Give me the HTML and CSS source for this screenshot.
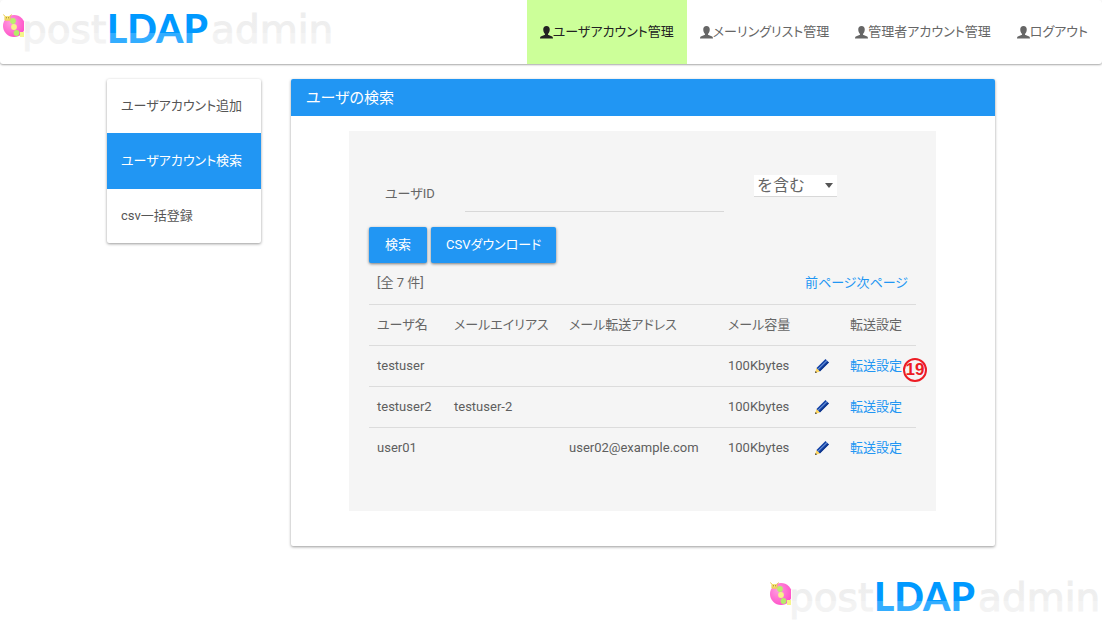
FILE: index.html
```
<!DOCTYPE html>
<html lang="ja">
<head>
<meta charset="utf-8">
<title>postLDAPadmin</title>
<link rel="stylesheet" href="styles.css">
</head>
<body>
<svg class="defs" width="0" height="0" aria-hidden="true">
  <defs>
    <linearGradient id="blue" gradientUnits="userSpaceOnUse" x1="0" y1="15" x2="0" y2="42">
      <stop offset="0" stop-color="#0099ff"/><stop offset=".66" stop-color="#0099ff"/>
      <stop offset=".67" stop-color="#33adff"/><stop offset="1" stop-color="#33adff"/>
    </linearGradient>
    <linearGradient id="grey" gradientUnits="userSpaceOnUse" x1="0" y1="15" x2="0" y2="42">
      <stop offset="0" stop-color="#eeeeee"/><stop offset=".66" stop-color="#efefef"/>
      <stop offset=".67" stop-color="#f3f3f3"/><stop offset="1" stop-color="#f3f3f3"/>
    </linearGradient>
    <radialGradient id="pink" cx=".35" cy=".35" r=".8">
      <stop offset="0" stop-color="#ff9be0"/><stop offset="1" stop-color="#ff45c4"/>
    </radialGradient>
    <symbol id="logo" viewBox="0 0 335 64">
      <circle cx="14" cy="26" r="11" fill="url(#pink)"/>
      <path d="M24 22h3v16h-3z" fill="#fff"/>
      <path d="M20 32h4v5h-4z" fill="#f6f58a"/>
      <circle cx="16.500" cy="33" r="2.900" fill="#b5ec6a"/>
      <circle cx="14" cy="27" r="2.900" fill="#f6f58a"/>
      <circle cx="13" cy="21" r="2.900" fill="#b9f06c"/>
      <path d="M5 16h5v4.500H5z" fill="#f8e67a"/>
      <path d="M3.500 14.500l1.500 2V20h5v-3.500l1.500-2" fill="none" stroke="#e9c94c"/>
      <path d="M6.500 17v1.500M8.500 17v1.500" stroke="#a58a30" stroke-width=".8"/>
      <text class="logo-light" x="22" y="43" fill="url(#grey)" stroke="url(#grey)">post</text>
      <text class="logo-bold" x="107" y="43" fill="url(#blue)">LDAP</text>
      <text class="logo-light" x="211" y="43" fill="url(#grey)" stroke="url(#grey)">admin</text>
    </symbol>
    <symbol id="person" viewBox="0 0 14 14">
      <path d="M7 0C4.600 0 3.500 1.600 3.500 3.800c0 1.900.7 3.700 1.900 4.700v1L1.500 11C.5 11.400 0 12 0 13.500h14c0-1.500-.5-2.100-1.500-2.500L8.600 9.500v-1c1.200-1 1.900-2.800 1.900-4.700C10.500 1.600 9.400 0 7 0z" fill="currentColor"/>
    </symbol>
    <symbol id="pencil" viewBox="0 0 14 14">
      <path d="M0 14l1.500-5 3.500 3.500z" fill="#ffd65c"/>
      <path d="M0 14l.6-2 1.400 1.400z" fill="#333"/>
      <path d="M1.500 9L10.500 0 14 3.500l-9 9z" fill="#1443a5"/>
      <path d="M3 10.300L12 1.500" stroke="#8fb4ee"/>
      <path d="M4.500 12L13.500 3" stroke="#0b2d78"/>
    </symbol>
  </defs>
</svg>

<header class="topbar">
  <a class="brand" href="#" aria-label="postLDAPadmin"><svg class="logo"><use href="#logo"/></svg></a>
  <nav class="tabs">
    <a class="tab tab-active" href="#"><svg class="person"><use href="#person"/></svg>ユーザアカウント管理</a>
    <a class="tab" href="#"><svg class="person"><use href="#person"/></svg>メーリングリスト管理</a>
    <a class="tab" href="#"><svg class="person"><use href="#person"/></svg>管理者アカウント管理</a>
    <a class="tab" href="#"><svg class="person"><use href="#person"/></svg>ログアウト</a>
  </nav>
</header>

<main class="layout">
  <nav class="side card">
    <a class="side-link" href="#">ユーザアカウント追加</a>
    <a class="side-link side-active" href="#">ユーザアカウント検索</a>
    <a class="side-link" href="#">csv一括登録</a>
  </nav>
  <section class="panel card">
    <h1 class="panel-title">ユーザの検索</h1>
    <div class="box">
      <form class="search">
        <div class="fields">
          <label class="field-label" for="uid">ユーザID</label>
          <input class="field-input" id="uid" type="text">
          <div class="select-wrap">
            <select class="field-select" aria-label="検索条件"><option>を含む</option></select>
            <svg class="caret" viewBox="0 0 8 5"><path d="M0 0h8L4 5z" fill="#555"/></svg>
          </div>
        </div>
        <div class="buttons">
          <button class="btn" type="button">検索</button>
          <button class="btn" type="button">CSVダウンロード</button>
        </div>
      </form>
      <table class="users">
        <colgroup><col class="c-name"><col class="c-alias"><col class="c-forward"><col class="c-size"><col class="c-edit"><col class="c-set"></colgroup>
        <thead>
          <tr class="summary"><td>[全 7 件]</td><td class="pager" colspan="5"><a href="#">前ページ</a><a href="#">次ページ</a></td></tr>
          <tr><th>ユーザ名</th><th>メールエイリアス</th><th>メール転送アドレス</th><th>メール容量</th><th></th><th>転送設定</th></tr>
        </thead>
        <tbody>
          <tr><td>testuser</td><td></td><td></td><td>100Kbytes</td><td><a href="#" aria-label="編集"><svg class="pencil"><use href="#pencil"/></svg></a></td><td class="marked"><a href="#">転送設定</a><span class="marker">19</span></td></tr>
          <tr><td>testuser2</td><td>testuser-2</td><td></td><td>100Kbytes</td><td><a href="#" aria-label="編集"><svg class="pencil"><use href="#pencil"/></svg></a></td><td><a href="#">転送設定</a></td></tr>
          <tr><td>user01</td><td></td><td>user02@example.com</td><td>100Kbytes</td><td><a href="#" aria-label="編集"><svg class="pencil"><use href="#pencil"/></svg></a></td><td><a href="#">転送設定</a></td></tr>
        </tbody>
      </table>
    </div>
  </section>
</main>

<footer class="footer"><svg class="logo" role="img" aria-label="postLDAPadmin"><use href="#logo"/></svg></footer>
</body>
</html>
```
FILE: styles.css
```
* { box-sizing: border-box; }
body {
  margin: 0;
  min-height: 100vh;
  display: flex;
  flex-direction: column;
  background: #fff;
  color: #666;
  font: 13px/20px Roboto, "Noto Sans CJK JP", sans-serif;
  font-feature-settings: "palt";
}
a { color: #2196f3; text-decoration: none; }
.defs { position: absolute; }

.topbar {
  display: flex;
  justify-content: space-between;
  height: 64px;
  border-radius: 3px;
  box-shadow: 0 1px 2px rgba(0, 0, 0, .35);
}
.brand { display: flex; }
.logo { width: 335px; height: 64px; display: block; }
.logo-light { font: 39px "DejaVu Sans", sans-serif; stroke-width: 1px; }
.logo-bold { font: 900 39px Lato, sans-serif; }
.tabs { display: flex; padding-right: 1px; }
.tab {
  display: flex;
  align-items: center;
  padding: 0 13px;
  color: #666;
  white-space: nowrap;
}
.tab-active { background: #ccff99; color: #222; }
.person { width: 13px; height: 13px; flex: none; }

.layout {
  display: grid;
  grid-template-columns: 154fr 704fr;
  gap: 30px;
  align-items: start;
  padding: 15px 107px 0;
}
.card {
  background: #fff;
  border-radius: 2px;
  box-shadow: 0 1px 3px rgba(0, 0, 0, .4);
  overflow: hidden;
}
.side-link {
  display: flex;
  align-items: center;
  height: 54px;
  padding: 0 14px;
  color: #555;
  white-space: nowrap;
}
.side-active { height: 56px; background: #2196f3; color: #fff; }

.panel { padding-bottom: 35px; }
.panel-title {
  margin: 0;
  padding: 9px 15px 8px;
  background: #2196f3;
  color: #fff;
  font-size: 15px;
  font-weight: 400;
  line-height: 20px;
}
.box { margin: 15px 59px 0 58px; padding: 20px 20px 43px; background: #f5f5f5; }
.fields {
  display: grid;
  grid-template-columns: 80px 259px 83px;
  column-gap: 16px;
  padding-top: 20px;
}
.field-label { padding: 13px 0 0 16px; }
.field-input {
  width: 100%;
  height: 41px;
  border: 0;
  border-bottom: 1px solid #d8d8d8;
  background: transparent;
  font: inherit;
  color: inherit;
}
.select-wrap { position: relative; margin: 4px 0 0 14px; width: 83px; height: 22px; }
.field-select {
  width: 100%;
  height: 22px;
  padding: 0 3px;
  border: 0;
  border-bottom: 1px solid #d8d8d8;
  appearance: none;
  background: #fff;
  color: #666;
  font: 16px/20px Roboto, "Noto Sans CJK JP", sans-serif;
}
.caret { position: absolute; right: 4px; top: 8px; width: 8px; height: 5px; pointer-events: none; }
.buttons { display: flex; gap: 4px; padding-top: 15px; }
.btn {
  min-width: 58px;
  height: 36px;
  padding: 0 15px;
  border: 0;
  border-radius: 2px;
  background: #2196f3;
  color: #fff;
  font: 400 13px/20px Roboto, "Noto Sans CJK JP", sans-serif;
  font-feature-settings: inherit;
  box-shadow: 0 1px 3px rgba(0, 0, 0, .5);
}

.users { width: 100%; table-layout: fixed; border-collapse: collapse; }
.c-name { width: 77px; }
.c-alias { width: 115px; }
.c-forward { width: 159px; }
.c-size { width: 86px; }
.c-edit { width: 36px; }
.c-set { width: 74px; }
.users th, .users td {
  height: 41px;
  padding: 0 8px;
  text-align: left;
  font-weight: 400;
  white-space: nowrap;
}
.users tbody td { color: #5e5e5e; }
.users tr + tr, .users tbody tr { border-top: 1px solid #dcdcdc; }
.users .pager { text-align: right; }
.pencil { display: block; width: 14px; height: 14px; margin-left: 1px; }
.marked { position: relative; }
.users .marker {
  position: absolute;
  right: -11px;
  top: 12px;
  width: 24px;
  height: 24px;
  border: 2px solid #ed1c24;
  border-radius: 50%;
  color: #ed1c24;
  font: 700 17px/20px "Liberation Sans Narrow", "Liberation Sans", sans-serif;
  text-align: center;
}
.footer { display: flex; justify-content: flex-end; margin-top: auto; }
```
